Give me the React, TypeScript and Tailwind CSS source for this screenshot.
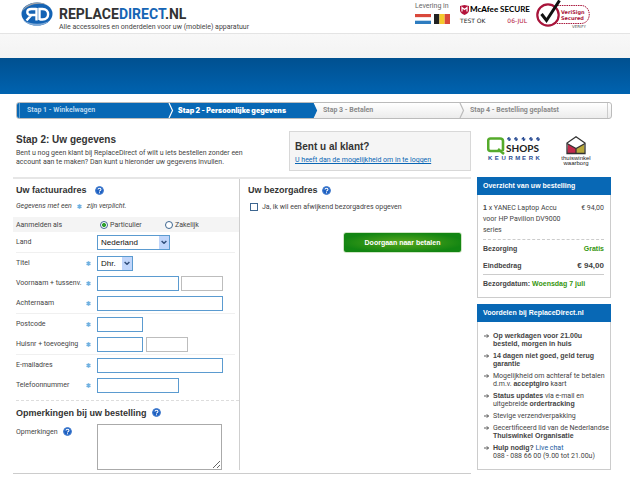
import React from "react";

const FIELD = "h-[15px] border bg-white px-1 text-[8px] outline-none";
const REQUIRED = "border-[#5b9bd0]";
const OPTIONAL = "border-[#bdbdbd]";
const BOLD = "font-['Liberation_Sans',Arial,sans-serif] font-bold";
const HEADING = BOLD + " leading-[12px] text-[#333]";

function Help() {
  return (
    <button type="button" aria-label="Help" className="block size-[9px] shrink-0">
      <svg viewBox="0 0 18 18" className="block size-full">
        <circle cx="9" cy="9" r="8.6" fill="#1d5fc0" />
        <circle cx="9" cy="9" r="7.4" fill="none" stroke="#5f94dc" strokeWidth="1" />
        <path d="M6 7.2C6 3.6 12 3.8 12 7C12 9 9 8.8 9 11M9 12.6V14.6" fill="none" stroke="#fff" strokeWidth="2.1" />
      </svg>
    </button>
  );
}

function Star() {
  return (
    <svg viewBox="0 0 10 10" className="block size-[5px] shrink-0" aria-hidden="true">
      <path d="M5 0.5V9.5M1 2.8L9 7.2M9 2.8L1 7.2" stroke="#6fb0e0" strokeWidth="3.2" />
    </svg>
  );
}

function B({ children }: { children: React.ReactNode }) {
  return <b className={"leading-none " + BOLD}>{children}</b>;
}

function Row({
  id,
  label,
  required = true,
  line = false,
  children,
}: {
  id: string;
  label: string;
  required?: boolean;
  line?: boolean;
  children: React.ReactNode;
}) {
  return (
    <div className={"mr-[4px] flex items-center " + (line ? "h-[21px] border-b border-[#f0f0f0]" : "h-[20px]")}>
      <label htmlFor={id} className="w-[70px] shrink-0 whitespace-nowrap">
        {label}
      </label>
      <span className="w-[11px] shrink-0">{required && <Star />}</span>
      {children}
    </div>
  );
}

function Select({ id, width, value }: { id: string; width: string; value: string }) {
  return (
    <span className={"relative block h-[15px] " + width}>
      <select
        id={id}
        className="block h-full w-full appearance-none border border-[#5b9bd0] bg-white pl-[3px] font-['Liberation_Sans',Arial,sans-serif] text-[8px] leading-[13px] text-[#111]"
      >
        <option>{value}</option>
      </select>
      <span className="pointer-events-none absolute inset-y-px right-px flex w-[10px] items-center justify-center bg-[#c1d6fb]">
        <svg viewBox="0 0 10 8" className="w-[6px]">
          <path d="M1 1.5L5 5.5L9 1.5" fill="none" stroke="#33507c" strokeWidth="2.4" />
        </svg>
      </span>
    </span>
  );
}

function Header() {
  return (
    <header>
      <div className="flex h-[33px] justify-between pl-5 pr-[38px]">
        <a href="#" className="flex">
          <svg viewBox="0 0 34 26" className="mt-[1px] block h-[26px] w-[34px]" aria-label="RD">
            <ellipse cx="17" cy="13" rx="15.5" ry="11.5" fill="#1463b4" />
            <path d="M2 11C5 2 18-1 27 4C17 1 7 4 2 11Z" fill="#9aa0a8" />
            <path d="M3 19C9 26 24 27 30 19C24 24 11 24 3 19Z" fill="#7fa9d6" />
            <path d="M16.5 7V19.5M16.5 8H11.5C6 8 6 14 11 14H16.5M11.5 14L6.5 19.5M19.5 19V8H22.5C30 8 30 18.5 22.5 18.5H19.5" fill="none" stroke="#fff" strokeWidth="2.4" />
          </svg>
          <span className="ml-[5px] mt-[6px] block whitespace-nowrap">
            <span className="block text-[14px] font-bold leading-[17px] text-[#333]">
              REPLACE<span className="text-[#1565b5]">DIRECT</span>.NL
            </span>
            <span className="block text-[7px] leading-[8px]">
              Alle accessoires en onderdelen voor uw (mobiele) apparatuur
            </span>
          </span>
        </a>
        <div className="flex">
          <div className="w-[45px] pt-[2px]">
            <p className="text-[7px] leading-[9px] text-[#666]">Levering in</p>
            <div className="mt-[3px] flex gap-[3px]">
              <svg viewBox="0 0 16 10" className="h-[10px] w-4">
                <path d="M0 0H16V3.4H0Z" fill="#d9483b" />
                <path d="M0 3.4H16V6.7H0Z" fill="#fff" />
                <path d="M0 6.7H16V10H0Z" fill="#2d7cc0" />
              </svg>
              <svg viewBox="0 0 16 10" className="h-[10px] w-4">
                <path d="M0 0H5.4V10H0Z" fill="#222" />
                <path d="M5.4 0H10.7V10H5.4Z" fill="#f5c92c" />
                <path d="M10.7 0H16V10H10.7Z" fill="#d9483b" />
              </svg>
            </div>
          </div>
          <div className="w-[67px] pt-[4px]">
            <div className="flex items-center gap-[1px] whitespace-nowrap">
              <svg viewBox="0 0 18 20" className="h-[10px] w-[9px] shrink-0">
                <path d="M0 2L9 0L18 2V11C18 15 13 18 9 20C5 18 0 15 0 11Z" fill="#b3133b" />
                <path d="M4 13V5L9 9L14 5V13" fill="none" stroke="#fff" strokeWidth="2.4" />
              </svg>
              <span className="font-['Lato',sans-serif] text-[8px] font-bold leading-[11px] text-black">
                <span className="font-black">McAfee</span> SECURE
              </span>
            </div>
            <div className="flex justify-between font-['DejaVu_Sans',sans-serif] text-[6px] leading-[11px]">
              <span className="text-[#222]">TEST OK</span>
              <span className="text-[#b3133b]">06-JUL</span>
            </div>
          </div>
          <svg viewBox="0 0 57 29" className="ml-[8px] block h-[29px] w-[57px]" aria-label="VeriSign Secured">
            <path d="M20 5.5H46C57 5.5 57 23.5 46 23.5H20" fill="#fff" stroke="#a8143a" strokeWidth="1" strokeDasharray="1.5 0.8" />
            <circle cx="13" cy="15" r="10.7" fill="#fff" stroke="#a8143a" strokeWidth="2.2" />
            <path d="M6.5 14L11.5 20.5L24.5 0.5" fill="none" stroke="#111" strokeWidth="3" />
            <text x="26" y="14" fontSize="5" fontWeight="bold" fill="#a8143a" fontFamily="DejaVu Sans">VeriSign</text>
            <text x="26" y="20" fontSize="5" fontWeight="bold" fill="#a8143a" fontFamily="DejaVu Sans">Secured</text>
            <text x="37" y="28" fontSize="4" fill="#555" fontFamily="DejaVu Sans">VERIFY</text>
          </svg>
        </div>
      </div>
      <div className="h-[25px] border-t border-[#e4e4e4] bg-linear-to-b from-[#f8f8f8] to-[#f3f3f3]" />
      <nav className="h-[36px] bg-linear-to-b from-[#005090] to-[#0063b0]" />
    </header>
  );
}

function Divider({ color, back }: { color: string; back: string }) {
  return (
    <svg viewBox="0 0 6 15" className="block h-full w-[6px] shrink-0">
      <path d="M0 0H1L4.5 7.5L1 15H0Z" fill={back} />
      <path d="M1 0L4.5 7.5L1 15" fill="none" stroke={color} strokeWidth="1.2" />
    </svg>
  );
}

function Steps() {
  return (
    <ol className="ml-4 mr-[18px] mt-[8px] flex h-[17px] overflow-hidden rounded-[3px] border border-[#bbb] bg-linear-to-b from-white to-[#ececec] text-[7px] font-bold leading-[15px] text-[#8a8a8a]">
      <li className="flex w-[157px] bg-[#0868b5] text-[#b9d8f0]">
        <span className="mx-[2px] w-px shrink-0 bg-[#5a9fd4]" />
        <span className="flex-1 pl-[5px]">Stap 1 - Winkelwagen</span>
        <Divider color="#fff" back="#0868b5" />
      </li>
      <li className="flex w-[138px] bg-[#0868b5] text-white">
        <span className="flex-1 pl-[4px] font-['Inter',sans-serif] font-black">Stap 2 - Persoonlijke gegevens</span>
      </li>
      <li className="flex w-[153px]">
        <Divider color="#0868b5" back="#0868b5" />
        <span className="flex-1 pl-[5px]">Stap 3 - Betalen</span>
        <Divider color="#bbb" back="none" />
      </li>
      <li className="flex flex-1">
        <span className="flex-1 pl-[5px]">Stap 4 - Bestelling geplaatst</span>
        <span className="mr-[3px] w-px bg-[#ccc]" />
      </li>
    </ol>
  );
}

function BillingForm() {
  return (
    <section className="w-[227px] shrink-0 border-r border-[#cfcfcf] pl-[3px]">
      <h2 className={"flex h-[22px] items-center gap-[8px] text-[9px] " + HEADING}>
        Uw factuuradres <Help />
      </h2>
      <p className="flex h-[10px] items-center gap-[5px] italic">
        Gegevens met een <Star /> zijn verplicht.
      </p>
      <fieldset className="-ml-[3px] mt-[6px] flex h-[15px] items-center bg-[#f4f4f4] pl-[3px]">
        <legend className="float-left w-[84px]">Aanmelden als</legend>
        <label className="flex w-[65px] items-center gap-[2px]">
          <input type="radio" name="kind" defaultChecked className="m-0 size-[8px] appearance-none rounded-full border border-[#3d6690] bg-white checked:bg-radial checked:from-[#2da02d] checked:from-40% checked:to-white checked:to-55%" />
          Particulier
        </label>
        <label className="flex items-center gap-[2px]">
          <input type="radio" name="kind" className="m-0 size-[8px] appearance-none rounded-full border border-[#3d6690] bg-white" />
          Zakelijk
        </label>
      </fieldset>
      <Row id="land" label="Land" required={false} line>
        <Select id="land" width="w-[73px]" value="Nederland" />
      </Row>
      <Row id="titel" label="Titel">
        <Select id="titel" width="w-[36px]" value="Dhr." />
      </Row>
      <Row id="voornaam" label="Voornaam + tussenv.">
        <input id="voornaam" className={"w-[82px] " + FIELD + " " + REQUIRED} />
        <input aria-label="Tussenvoegsel" className={"ml-[2px] w-[42px] " + FIELD + " " + OPTIONAL} />
      </Row>
      <Row id="achternaam" label="Achternaam" line>
        <input id="achternaam" className={"w-[126px] " + FIELD + " " + REQUIRED} />
      </Row>
      <Row id="postcode" label="Postcode">
        <input id="postcode" className={"w-[46px] " + FIELD + " " + REQUIRED} />
      </Row>
      <Row id="huisnr" label="Huisnr + toevoeging" line>
        <input id="huisnr" className={"w-[46px] " + FIELD + " " + REQUIRED} />
        <input aria-label="Toevoeging" className={"ml-[3px] w-[42px] " + FIELD + " " + OPTIONAL} />
      </Row>
      <Row id="email" label="E-mailadres">
        <input id="email" type="email" className={"w-[126px] " + FIELD + " " + REQUIRED} />
      </Row>
      <Row id="telefoon" label="Telefoonnummer">
        <input id="telefoon" type="tel" className={"w-[82px] " + FIELD + " " + REQUIRED} />
      </Row>
      <div className="mt-[5px] border-t border-dashed border-[#ddd]" />
      <h2 className={"flex h-[23px] items-center gap-[5px] text-[9px] " + HEADING}>
        Opmerkingen bij uw bestelling <Help />
      </h2>
      <div className="flex">
        <div className="flex w-[81px] gap-[5px] pt-[3px]">
          <label htmlFor="opm" className="leading-[10px]">
            Opmerkingen
          </label>
          <Help />
        </div>
        <textarea id="opm" className="block h-[46px] w-[125px] resize border border-[#aaa] bg-white" />
      </div>
    </section>
  );
}

function ShippingForm() {
  return (
    <section className="flex-1 pl-[8px] pr-[9px]">
      <h2 className={"flex h-[22px] items-center gap-[4px] text-[9px] " + HEADING}>
        Uw bezorgadres <Help />
      </h2>
      <label className="ml-[2px] mt-[1px] flex h-[10px] items-center gap-[4px]">
        <input type="checkbox" className="m-0 size-[8px] appearance-none border border-[#3d6690] bg-white" />
        Ja, ik wil een afwijkend bezorgadres opgeven
      </label>
      <button
        type="button"
        className="ml-auto mt-[20px] block h-[21px] w-[119px] rounded-[3px] border border-[#cfe5c4] bg-[radial-gradient(ellipse_at_center,#5aa81c,#128512_75%)] font-['Liberation_Sans',Arial,sans-serif] text-[7px] font-bold leading-[19px] text-white"
      >
        Doorgaan naar betalen
      </button>
    </section>
  );
}

function Logos() {
  return (
    <div className="flex h-[46px] items-start gap-[19px] pl-[10px] pt-[5px]">
      <svg viewBox="0 0 53 27" className="h-[27px] w-[53px]" aria-label="Q Shops Keurmerk">
        <path d="M3.5 2.5H13Q16 2.5 16 5V13.5Q16 15 13 15H3.5Q1.2 15 1.2 12.5V5Q1.2 2.5 3.5 2.5ZM11 13L17 18" fill="none" stroke="#55ab2b" strokeWidth="2.6" />
        <g stroke="#2a4d94" strokeWidth="1.2">
          {[22, 29, 36.5, 44, 51].map((x) => (
            <path key={x} d={`M${x} 1V5M${x - 2} 3H${x + 2}M${x - 1.3} 1.8L${x + 1.3} 4.4`} />
          ))}
        </g>
        <text x="19" y="15.5" fontSize="10" fontWeight="bold" fill="#222" fontFamily="Lato">SHOPS</text>
        <g fontSize="6" fontWeight="bold" fill="#2a4d94" fontFamily="Liberation Sans">
          {"KEURMERK".split("").map((c, i) => (
            <text key={i} x={1 + i * 6.8} y="24">{c}</text>
          ))}
        </g>
      </svg>
      <svg viewBox="0 0 34 30" className="h-[30px] w-[34px]" aria-label="Thuiswinkel waarborg">
        <path d="M9 8L17 12.5V18H8Z" fill="#c22a4b" />
        <path d="M25 8L17 12.5V18H26Z" fill="#b9a83a" />
        <path d="M8 17.5V7L17 0.8L26 7V17.5Z" fill="none" stroke="#333" strokeWidth="1.3" />
        <path d="M8 7.5L17 12.5L26 7.5M17 12.5V18" fill="none" stroke="#333" strokeWidth="1.3" />
        <g fontSize="6" fill="#222" textAnchor="middle" fontFamily="Liberation Sans">
          <text x="17" y="23.5">thuiswinkel</text>
          <text x="17" y="29">waarborg</text>
        </g>
      </svg>
    </div>
  );
}

function Panel({ title, children }: { title: string; children: React.ReactNode }) {
  return (
    <section>
      <h3 className={"h-[18px] bg-[#0868b5] pl-[6px] text-[7px] leading-[18px] text-white " + BOLD}>{title}</h3>
      <div className="border-x border-b border-[#ccc] pl-[5px] pr-[6px]">{children}</div>
    </section>
  );
}

function Benefit({ children }: { children: React.ReactNode }) {
  return (
    <li className="flex gap-[4px]">
      <svg viewBox="0 0 10 16" className="h-[8px] w-[5px] shrink-0">
        <path d="M0 8H9M5.5 4.5L9 8L5.5 11.5" fill="none" stroke="#333" strokeWidth="1.6" />
      </svg>
      <div className="whitespace-nowrap">{children}</div>
    </li>
  );
}

function Sidebar() {
  return (
    <aside className="w-[134px] shrink-0">
      <Logos />
      <Panel title="Overzicht van uw bestelling">
        <div className="flex justify-between pb-[3px] pt-[8px] leading-[11px]">
          <p>
            <B>1</B> x YANEC Laptop Accu
            <br />
            voor HP Pavilion DV9000
            <br />
            series
          </p>
          <span>€ 94,00</span>
        </div>
        <div className={"leading-[17px] " + BOLD}>
          <p className="flex justify-between border-t border-dashed border-[#ccc]">
            Bezorging <span className="text-[#36960f]">Gratis</span>
          </p>
          <p className="flex items-center justify-between border-b border-[#ccc]">
            Eindbedrag <span className="text-[8px]">€ 94,00</span>
          </p>
          <p className="pb-[5px]">
            Bezorgdatum: <span className="text-[#36960f]">Woensdag 7 juli</span>
          </p>
        </div>
      </Panel>
      <div className="h-[6px]" />
      <Panel title="Voordelen bij ReplaceDirect.nl">
        <ul className="flex flex-col gap-[4px] pb-[9px] pl-[1px] pt-[10px] leading-[8px]">
          <Benefit><B>Op werkdagen voor 21.00u<br />besteld, morgen in huis</B></Benefit>
          <Benefit><B>14 dagen niet goed, geld terug<br />garantie</B></Benefit>
          <Benefit>Mogelijkheid om achteraf te betalen<br />d.m.v. <B>acceptgiro</B> kaart</Benefit>
          <Benefit><B>Status updates</B> via e-mail en<br />uitgebreide <B>ordertracking</B></Benefit>
          <Benefit>Stevige verzendverpakking</Benefit>
          <Benefit>Gecertificeerd lid van de Nederlandse<br /><B>Thuiswinkel Organisatie</B></Benefit>
          <Benefit><B>Hulp nodig?</B> <a href="#" className="text-[#1a5a9e]">Live chat</a><br />088 - 088 66 00 (9.00 tot 21.00u)</Benefit>
        </ul>
      </Panel>
    </aside>
  );
}

export default function App() {
  return (
    <div className="min-h-screen bg-white font-['Roboto',Arial,sans-serif] text-[7px] leading-[10px] text-[#444]">
      <Header />
      <Steps />
      <main className="flex gap-[6px] pl-[13px] pr-[19px] pt-[12px]">
        <div className="min-w-0 flex-1">
          <div className="flex h-[46px] justify-between">
            <div className="pl-[3px] pt-[3px]">
              <h1 className={"text-[10px] " + HEADING}>Stap 2: Uw gegevens</h1>
              <p className="mt-[3px] leading-[9px]">
                Bent u nog geen klant bij ReplaceDirect of wilt u iets bestellen zonder een
                <br />
                account aan te maken? Dan kunt u hieronder uw gegevens invullen.
              </p>
            </div>
            <div className="h-[40px] w-[182px] border border-[#d8d8d8] bg-[#f5f5f5] pl-[5px] pt-[9px]">
              <h2 className={"text-[10px] " + HEADING}>Bent u al klant?</h2>
              <a href="#" className="block pt-[2px] text-[#0a66b4] underline">U heeft dan de mogelijkheid om in te loggen</a>
            </div>
          </div>
          <div className="flex border-b border-t-2 border-b-[#ccc] border-t-[#e6e6e6] pb-[3px]">
            <BillingForm />
            <ShippingForm />
          </div>
        </div>
        <Sidebar />
      </main>
    </div>
  );
}
